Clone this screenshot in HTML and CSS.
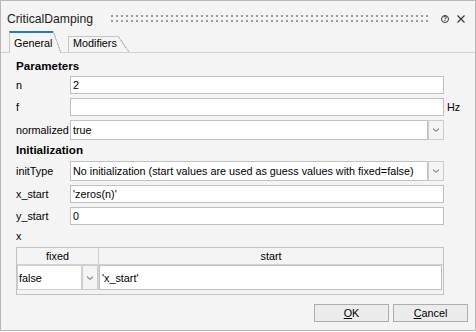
FILE: index.html
```html
<!DOCTYPE html>
<html>
  <head>
    <title>CriticalDamping</title>
    <link rel="stylesheet" href="styles.css">
  </head>
  <body>
    <div class="window">
      <div class="titlebar">
        <span class="title">CriticalDamping</span>
        <span class="grip"></span>
        <span class="help">?</span>
        <svg class="close" width="8" height="8" viewBox="0 0 8 8">
          <path d="M0.5 0.5 L7.5 7.5 M7.5 0.5 L0.5 7.5" stroke="#333" stroke-width="1.1" fill="none" />
        </svg>
      </div>

      <div class="tabs">
        <div class="tab active">General</div>
        <div class="tab">Modifiers</div>
      </div>

      <div class="pane">
        <div class="section first">Parameters</div>
        <div class="row first-row">
          <label>n</label>
          <div class="field">2</div>
        </div>
        <div class="row">
          <label>f</label>
          <div class="field"></div>
          <span class="unit">Hz</span>
        </div>
        <div class="row">
          <label>normalized</label>
          <div class="combo">
            <div class="combo-text">true</div>
            <div class="combo-btn">
              <svg width="6" height="4" viewBox="0 0 6 4"><polygon points="0,0 3,2.4 6,0 6,1.4 3,4 0,1.4" fill="#8a8a8a" /></svg>
            </div>
          </div>
        </div>

        <div class="section">Initialization</div>
        <div class="row first-row">
          <label>initType</label>
          <div class="combo">
            <div class="combo-text">No initialization (start values are used as guess values with fixed=false)</div>
            <div class="combo-btn">
              <svg width="6" height="4" viewBox="0 0 6 4"><polygon points="0,0 3,2.4 6,0 6,1.4 3,4 0,1.4" fill="#8a8a8a" /></svg>
            </div>
          </div>
        </div>
        <div class="row">
          <label>x_start</label>
          <div class="field">'zeros(n)'</div>
        </div>
        <div class="row">
          <label>y_start</label>
          <div class="field">0</div>
        </div>

        <div class="caption">x</div>
        <div class="grid">
          <div class="grid-head">
            <div class="head-cell">fixed</div>
            <div class="sep"></div>
            <div class="head-cell">start</div>
          </div>
          <div class="grid-row">
            <div class="combo cell-combo">
              <div class="combo-text">false</div>
              <div class="combo-btn">
                <svg width="6" height="4" viewBox="0 0 6 4"><polygon points="0,0 3,2.4 6,0 6,1.4 3,4 0,1.4" fill="#8a8a8a" /></svg>
              </div>
            </div>
            <div class="sep"></div>
            <div class="cell-edit">'x_start'</div>
          </div>
          <div class="grid-foot"></div>
        </div>
      </div>

      <div class="buttons">
        <button><u>O</u>K</button>
        <button><u>C</u>ancel</button>
      </div>
    </div>
  </body>
</html>
```
FILE: styles.css
```css
body {
  margin: 0;
  font-family: "Liberation Sans", Arial, sans-serif;
  font-size: 10.8px;
  color: #000;
}
.window {
  box-sizing: border-box;
  width: 476px;
  height: 331px;
  border: 1px solid #b8b8b8;
  background: #f4f4f4;
  display: flex;
  flex-direction: column;
}

/* title bar */
.titlebar {
  box-sizing: border-box;
  height: 30px;
  padding: 5px 10px 0 6px;
  display: flex;
  align-items: center;
}
.title {
  font-size: 12.2px;
  color: #1b1b1b;
}
.grip {
  flex: 1;
  height: 7px;
  margin: 0 10px 0 18px;
  background-image: linear-gradient(90deg, #9c9c9c 2px, transparent 2px),
    linear-gradient(90deg, #9c9c9c 2px, transparent 2px);
  background-size: 5px 2px, 5px 2px;
  background-position: 0 0, 0 5px;
  background-repeat: repeat-x, repeat-x;
}
.help {
  box-sizing: border-box;
  width: 8px;
  height: 8px;
  border: 1px solid #333;
  border-radius: 50%;
  margin-right: 8px;
  font-size: 6.5px;
  font-weight: bold;
  line-height: 6px;
  text-align: center;
  color: #333;
}
.close {
  display: block;
}

/* tabs */
.tabs {
  height: 21px;
  padding-left: 8px;
  border-bottom: 1px solid #d0d0d0;
  display: flex;
  align-items: flex-end;
}
.tab {
  position: relative;
  box-sizing: border-box;
  border-left: 1px solid #c6c6c6;
  border-top: 1px solid #c6c6c6;
  background: #f4f4f4;
  white-space: nowrap;
}
.tab::after {
  content: "";
  position: absolute;
  top: -1px;
  bottom: 0;
  right: -11px;
  width: 11px;
  background: linear-gradient(to top right, #f4f4f4 calc(50% - 0.6px), #c6c6c6 calc(50% - 0.6px),
      #c6c6c6 calc(50% + 0.6px), transparent calc(50% + 0.6px));
}
.tab.active {
  width: 44px;
  height: 22px;
  margin-bottom: -1px;
  padding: 3px 0 0 4px;
  line-height: 14px;
  border-top: 2px solid #1f7bc4;
}
.tab.active::after {
  top: -2px;
  right: -8px;
  width: 8px;
}
.tab + .tab {
  width: 50px;
  height: 16px;
  margin-left: 15px;
  padding-left: 4px;
  line-height: 12px;
}

/* form */
.pane {
  padding-left: 15px;
  display: flex;
  flex-direction: column;
}
.section {
  font-size: 11.6px;
  font-weight: bold;
  line-height: 14px;
  margin-top: 3px;
}
.section.first {
  margin-top: 6px;
}
.row {
  display: grid;
  grid-template-columns: 54px 374px 31px;
  align-items: center;
  margin-top: 4px;
}
.row.first-row {
  margin-top: 3px;
}
.section:not(.first) + .row.first-row {
  margin-top: 4px;
}
label {
  white-space: nowrap;
}
.field {
  box-sizing: border-box;
  height: 18px;
  border: 1px solid #bfbfbf;
  background: #fff;
  padding-left: 2px;
  display: flex;
  align-items: center;
  white-space: nowrap;
}
.unit {
  padding-left: 3px;
}
.combo {
  display: flex;
  height: 20px;
}
.combo-text {
  box-sizing: border-box;
  flex: 1;
  border: 1px solid #c2c2c2;
  background: #fff;
  padding-left: 2px;
  display: flex;
  align-items: center;
  white-space: nowrap;
  overflow: hidden;
}
.combo-btn {
  box-sizing: border-box;
  width: 16px;
  border: 1px solid #cdcdcd;
  background: #f4f4f4;
  display: flex;
  align-items: center;
  justify-content: center;
}
.combo-btn svg {
  display: block;
}
.caption {
  line-height: 13px;
  margin-top: 5px;
}

/* table */
.grid {
  margin: 4px 31px 0 0;
  border: 1px solid #c3c3c3;
}
.grid-head,
.grid-row {
  display: grid;
  grid-template-columns: 81px 1px 1fr;
}
.grid-head {
  height: 16px;
  border-bottom: 1px solid #d2d2d2;
}
.head-cell {
  line-height: 16px;
  text-align: center;
}
.sep {
  background: #d2d2d2;
}
.grid-row {
  height: 25px;
}
.cell-combo {
  height: 25px;
}
.cell-combo .combo-text {
  border-color: #d0d0d0;
  padding-left: 1px;
}
.cell-edit {
  box-sizing: border-box;
  margin-right: 1px;
  border: 1px solid #c0c0c0;
  background: #fff;
  padding-left: 2px;
  display: flex;
  align-items: center;
}
.grid-foot {
  height: 4px;
}

/* buttons */
.buttons {
  margin-top: auto;
  padding: 0 7px 8px 0;
  display: flex;
  justify-content: flex-end;
  gap: 4px;
}
button {
  box-sizing: border-box;
  width: 75px;
  height: 18px;
  padding: 0;
  border: 1px solid #adadad;
  background: #ececec;
  font-family: inherit;
  font-size: 10.8px;
  line-height: 16px;
  color: #000;
}
```
